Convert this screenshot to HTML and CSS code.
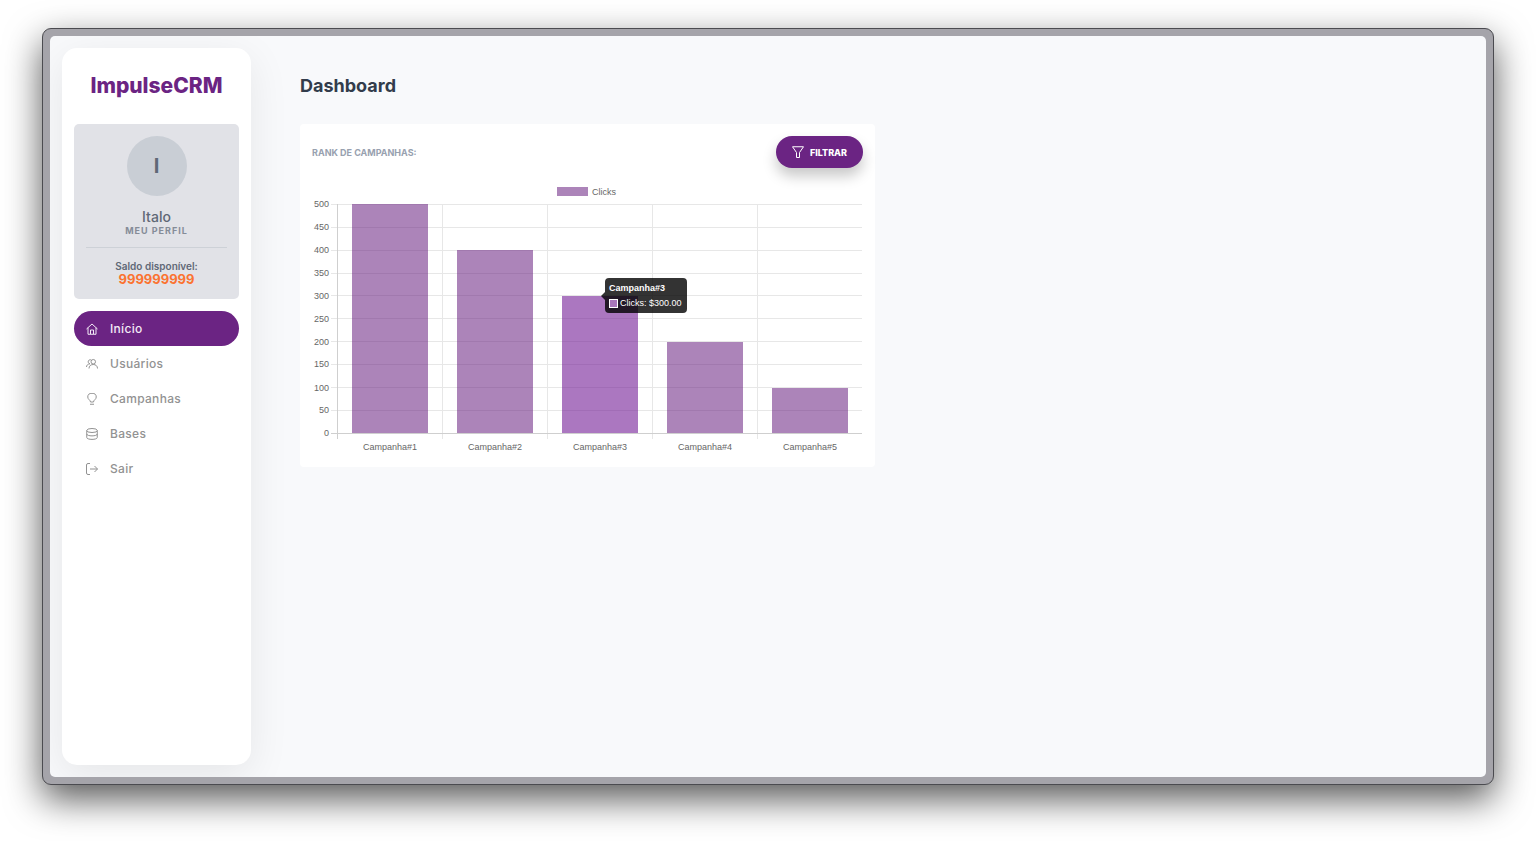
FILE: index.html
```html
<!DOCTYPE html>
<html lang="pt-BR">
<head>
<meta charset="utf-8">
<meta name="viewport" content="width=device-width, initial-scale=1">
<title>ImpulseCRM - Dashboard</title>
<link rel="stylesheet" href="styles.css">
</head>
<body>
<div class="window">
  <div class="app">
    <aside class="sidebar">
      <div class="brand">ImpulseCRM</div>
      <section class="profile">
        <div class="avatar">I</div>
        <div class="profile-name">Italo</div>
        <a class="profile-link" href="#perfil">MEU PERFIL</a>
        <div class="balance">
          <div class="balance-label">Saldo disponível:</div>
          <div class="balance-value">999999999</div>
        </div>
      </section>
      <nav class="nav">
        <a class="nav-item active" href="#inicio">
          <svg class="icon" viewBox="0 0 24 24"><path d="M1 12 12 2l11 10M4 9.500V22.500h16V9.500M9 22v-8h6v8"/></svg>
          <span>Início</span>
        </a>
        <a class="nav-item" href="#usuarios">
          <svg class="icon" viewBox="0 0 24 24"><circle cx="14.500" cy="7.500" r="4.500"/><path d="M6 21c0-5 3.500-8 8.500-8s8.500 3 8.500 8M11 4.500a4 4 0 1 0-3 7M1 18c0-3.500 2.500-6 7-6.500"/></svg>
          <span>Usuários</span>
        </a>
        <a class="nav-item" href="#campanhas">
          <svg class="icon" viewBox="0 0 24 24"><path d="M9 18c0-4-5.500-5-5.500-10a8.500 7.500 0 0 1 17 0c0 5-5.500 6-5.500 10zM8 22.500h8"/></svg>
          <span>Campanhas</span>
        </a>
        <a class="nav-item" href="#bases">
          <svg class="icon" viewBox="0 0 24 24"><ellipse cx="12" cy="5" rx="10.500" ry="4"/><path d="M1.500 5v14c0 5 21 5 21 0V5M1.500 12c0 5 21 5 21 0"/></svg>
          <span>Bases</span>
        </a>
        <a class="nav-item" href="#sair">
          <svg class="icon" viewBox="0 0 24 24"><path d="M8 1H4a3 3 0 0 0-3 3v16a3 3 0 0 0 3 3h4M8 12h15M17 6l6 6-6 6"/></svg>
          <span>Sair</span>
        </a>
      </nav>
    </aside>
    <main class="main">
      <h1 class="title">Dashboard</h1>
      <div class="grid">
        <section class="card">
          <header class="card-head">
            <h2 class="card-title">RANK DE CAMPANHAS:</h2>
            <button class="filter" type="button">
              <svg class="icon" viewBox="0 0 24 24"><path d="M1 1.500h22L15 13v10H9V13z"/></svg>
              <span>FILTRAR</span>
            </button>
          </header>
          <svg class="chart" viewBox="0 0 551 275" role="img" aria-label="Clicks por campanha">
            <rect class="bar" x="245" y="7" width="31" height="9"/>
            <text class="label" x="280" y="15">Clicks</text>
            <path class="lines" d="M19 24.500H550M19 47.500H550M19 70.500H550M19 93.500H550M19 115.500H550M19 138.500H550M19 161.500H550M19 184.500H550M19 207.500H550M19 230.500H550M130.500 24V259M235.500 24V259M340.500 24V259M445.500 24V259"/>
            <path class="axis" d="M25.500 24V259M19 253.500H550"/>
            <g class="label end">
              <text x="17" y="27">500</text>
              <text x="17" y="50">450</text>
              <text x="17" y="73">400</text>
              <text x="17" y="96">350</text>
              <text x="17" y="119">300</text>
              <text x="17" y="142">250</text>
              <text x="17" y="165">200</text>
              <text x="17" y="187">150</text>
              <text x="17" y="211">100</text>
              <text x="17" y="233">50</text>
              <text x="17" y="256">0</text>
            </g>
            <rect class="bar" x="40" y="24" width="76" height="229"/>
            <rect class="bar" x="145" y="70" width="76" height="183"/>
            <rect class="bar hover" x="250" y="116" width="76" height="137"/>
            <rect class="bar" x="355" y="162" width="76" height="91"/>
            <rect class="bar" x="460" y="208" width="76" height="45"/>
            <g class="label middle">
              <text x="78" y="270">Campanha#1</text>
              <text x="183" y="270">Campanha#2</text>
              <text x="288" y="270">Campanha#3</text>
              <text x="393" y="270">Campanha#4</text>
              <text x="498" y="270">Campanha#5</text>
            </g>
            <path class="tip" d="M297 98h74q4 0 4 4v27q0 4-4 4h-74q-4 0-4-4v-9l-4-4 4-4v-10q0-4 4-4z"/>
            <text class="tip-text strong" x="297" y="111">Campanha#3</text>
            <rect class="swatch" x="297.500" y="119.500" width="8" height="8"/>
            <text class="tip-text" x="308" y="126">Clicks: $300.00</text>
          </svg>
        </section>
      </div>
    </main>
  </div>
</div>
</body>
</html>
```
FILE: styles.css
```css
* { box-sizing: border-box; }

body {
  margin: 0;
  min-height: 100vh;
  display: flex;
  padding: 28px 42px 56px;
  background: #fff;
  font-family: Inter, "Open Sans", sans-serif;
  color: #5f6876;
}

.window {
  flex: 1;
  display: flex;
  padding: 7px;
  border: 1px solid #4b4b50;
  border-radius: 9px;
  background: #a5a4aa;
  box-shadow: 0 14px 36px rgba(0, 0, 0, 0.66);
}

.app {
  flex: 1;
  display: flex;
  padding: 12px;
  border-radius: 5px;
  background: #f8f9fb;
  overflow: hidden;
}

.sidebar {
  width: 189px;
  padding: 24px 12px;
  border-radius: 15px;
  background: #fff;
  box-shadow: 0 10px 40px rgba(0, 0, 0, 0.08);
}

.brand {
  line-height: 28px;
  margin-bottom: 24px;
  text-align: center;
  font-size: 21px;
  font-weight: 800;
  color: #6b2483;
}

.profile {
  display: flex;
  flex-direction: column;
  align-items: center;
  padding: 12px;
  margin-bottom: 12px;
  border-radius: 5px;
  background: #e1e2e7;
  text-align: center;
}

.avatar {
  width: 60px;
  height: 60px;
  margin-bottom: 12px;
  border-radius: 50%;
  background: #c9ced5;
  line-height: 60px;
  font-size: 20px;
  font-weight: 700;
}

.profile-name {
  line-height: 17px;
  font-size: 14px;
  font-weight: 500;
}

.profile-link {
  line-height: 11px;
  font-size: 9px;
  font-weight: 700;
  letter-spacing: 1px;
  color: #858c98;
  text-decoration: none;
}

.balance {
  align-self: stretch;
  margin-top: 11px;
  padding-top: 12px;
  border-top: 1px solid #cdd1d7;
}

.balance-label {
  line-height: 12px;
  font-size: 10px;
  font-weight: 600;
}

.balance-value {
  line-height: 15px;
  font-size: 13px;
  font-weight: 700;
  color: #fb7331;
}

.nav-item {
  display: flex;
  align-items: center;
  gap: 12px;
  height: 35px;
  padding: 0 12px;
  border-radius: 18px;
  font-size: 12px;
  font-weight: 500;
  letter-spacing: 0.025em;
  color: #929292;
  text-decoration: none;
}

.active {
  background: #6b2483;
  color: #f3eaf6;
}

.icon {
  width: 12px;
  height: 12px;
  fill: none;
  stroke: currentColor;
  stroke-width: 2;
  stroke-linejoin: round;
}

.main {
  flex: 1;
  padding: 24px 12px 24px 49px;
}

.title {
  margin: 0 0 24px;
  line-height: 28px;
  font-size: 18px;
  font-weight: 700;
  color: #323c4b;
}

.grid {
  display: grid;
  grid-template-columns: 1fr 1fr;
  gap: 12px;
}

.card {
  padding: 12px;
  border-radius: 4px;
  background: #fff;
}

.card-head {
  display: flex;
  align-items: center;
  justify-content: space-between;
  margin-bottom: 12px;
}

.card-title {
  margin: 0;
  font-size: 9px;
  font-weight: 700;
  color: #98a1af;
}

.filter {
  display: flex;
  align-items: center;
  gap: 6px;
  height: 32px;
  padding: 0 16px;
  border: 0;
  border-radius: 16px;
  background: #6b2483;
  box-shadow: 0 8px 14px rgba(0, 0, 0, 0.22);
  font-family: inherit;
  font-size: 9px;
  font-weight: 800;
  color: #fff;
}

.chart {
  display: block;
  width: 100%;
  font-family: "Liberation Sans", Arial, sans-serif;
  font-size: 9px;
}

.label { fill: #666; }
.end { text-anchor: end; }
.middle { text-anchor: middle; }
.lines { stroke: #e7e7e7; }
.axis { stroke: #cfcfcf; }
.bar { fill: rgba(107, 36, 131, 0.56); }
.hover { fill: rgba(115, 28, 150, 0.6); }
.tip { fill: rgba(0, 0, 0, 0.8); }
.tip-text { fill: #fff; }
.strong { font-weight: 700; }
.swatch { fill: #a976bb; stroke: #fff; }
```
